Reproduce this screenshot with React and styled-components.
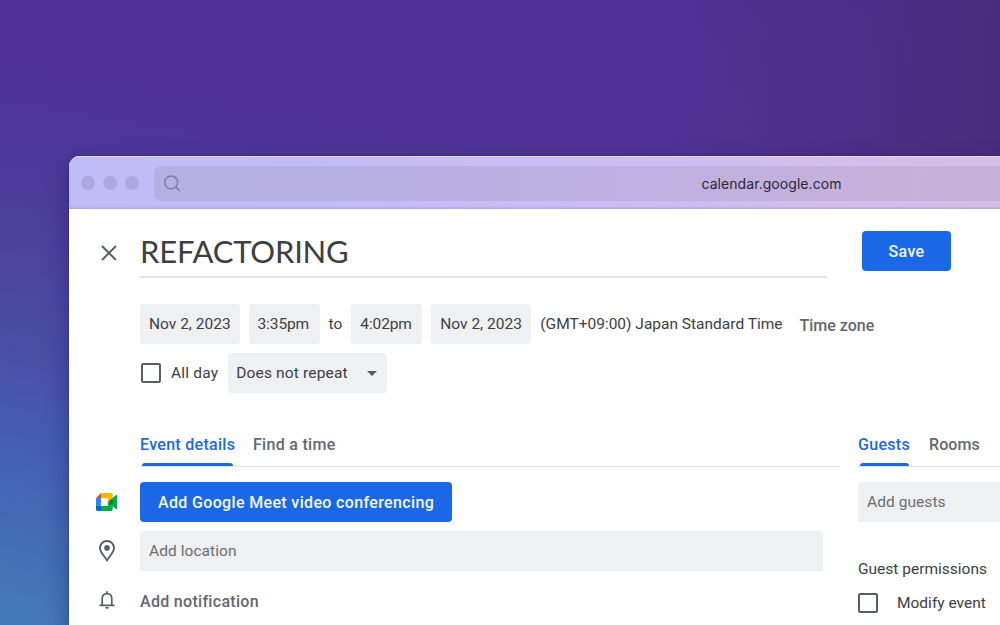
import React from "react";
import styled, { createGlobalStyle } from "styled-components";

const GlobalStyle = createGlobalStyle`
  *, *::before, *::after { box-sizing: border-box; }
  html, body { margin: 0; height: 100%; overflow: hidden; }
  body { font-family: Roboto, "Liberation Sans", sans-serif; color: #3c4043; }
`;

const Desktop = styled.div`
  width: 1000px;
  height: 625px;
  padding: 156px 0 0 69px;
  overflow: hidden;
  background:
    linear-gradient(93deg, rgba(72, 44, 120, 0) 65%, rgba(72, 44, 120, 0.4) 82%, rgba(72, 44, 120, 0.95) 100%),
    linear-gradient(190deg, #4e3096 0%, #4f3295 24%, #4e3496 34%, #4c3a9a 42%, #4d409c 50%, #4950a6 66%, #4560b1 78%, #4370b8 91%, #447abd 100%);
`;

const Window = styled.div`
  width: 1100px;
  height: 600px;
  border-radius: 11px 0 0 0;
  background: #fff;
  box-shadow: 0 0 2px rgba(20, 10, 60, 0.45), 0 10px 26px rgba(20, 12, 70, 0.36);
`;

const TitleBar = styled.div`
  display: flex;
  align-items: center;
  height: 53px;
  padding: 1px 0 0 12px;
  border-radius: 11px 0 0 0;
  background: linear-gradient(100deg, #c0bbf9 0%, #c5bcf6 30%, #cdbdf3 55%, #d5bfec 72%, #d6bfe8 85%);
  box-shadow: inset 0 1px 0 rgba(236, 226, 255, 0.75), inset 0 -2px 3px -1px rgba(90, 70, 150, 0.25);
`;

const Lights = styled.div`
  display: flex;
  gap: 8px;
  margin-right: 15px;
`;

const Light = styled.span`
  width: 14px;
  height: 14px;
  border-radius: 50%;
  background: #afa7df;
`;

const AddressBar = styled.div`
  display: flex;
  align-items: center;
  width: 1000px;
  height: 35px;
  padding-left: 9px;
  border-radius: 7px;
  background: rgba(143, 130, 160, 0.22);
`;

const Address = styled.span`
  margin: 2px 0 0 520.5px;
  font: 400 14px/20px Inter, sans-serif;
  letter-spacing: 0.06px;
  color: #2b2636;
`;

const Page = styled.main`
  display: flex;
  flex-direction: column;
  padding-left: 27px;
`;

const Header = styled.header`
  display: flex;
  height: 69px;
  align-items: flex-start;
`;

const CloseButton = styled.button`
  display: flex;
  width: 44px;
  height: 88px;
  padding: 36px 0 0 5px;
  border: 0;
  background: none;
`;

const Title = styled.h1`
  width: 687px;
  height: 69px;
  margin: 0;
  padding-top: 22px;
  border-bottom: 2px solid #e4e4e6;
  font: 400 31px/40px Lato, sans-serif;
  letter-spacing: -0.2px;
  color: #3c4043;
`;

const PrimaryButton = styled.button`
  width: ${(p) => p.$width};
  height: 40px;
  margin: ${(p) => p.$margin || "0"};
  padding: 1px 0 0;
  border: 0;
  border-radius: 4px;
  background: #1a68e6;
  color: #f4f8ff;
  font: 500 16px/39px Roboto, sans-serif;
  letter-spacing: 0.35px;
  white-space: nowrap;
`;

const FieldRow = styled.div`
  display: flex;
  align-items: center;
  height: 40px;
  margin: ${(p) => p.$margin};
`;

const Chip = styled.div`
  display: flex;
  align-items: center;
  width: ${(p) => p.$width};
  height: 40px;
  margin-right: ${(p) => p.$gap || "0"};
  padding-left: ${(p) => p.$inset || "9px"};
  border-radius: 4px;
  background: #eff0f2;
  font-size: 15.5px;
  line-height: 22px;
  letter-spacing: ${(p) => p.$spacing || "0"};
  white-space: nowrap;
`;

const Label = styled.span`
  margin: ${(p) => p.$margin || "0"};
  font-size: ${(p) => (p.$weight ? "16px" : "15.5px")};
  font-weight: ${(p) => p.$weight || 400};
  line-height: 22px;
  letter-spacing: ${(p) => p.$spacing || "0"};
  color: ${(p) => p.$color || "#3c4043"};
  white-space: nowrap;
`;

const Checkbox = styled.span`
  flex: none;
  width: 20px;
  height: 20px;
  border: 2px solid #5a5e63;
  border-radius: 2px;
`;

const Caret = styled.span`
  margin-left: 19px;
  border: 5px solid transparent;
  border-top-color: #55595d;
  border-bottom-width: 0;
`;

const Columns = styled.div`
  display: flex;
  gap: 18px;
  margin-top: 31px;
`;

const Details = styled.section`
  width: 744px;
`;

const Side = styled.section`
  width: 300px;
`;

const Tabs = styled.nav`
  display: flex;
  gap: 18px;
  height: 43px;
  margin-left: ${(p) => p.$indent || "0"};
  border-bottom: 1px solid #dfe0e2;
`;

const Tab = styled.div`
  position: relative;
  width: ${(p) => p.$width};
  padding-top: 10px;
  font: 500 16px/22px Roboto, sans-serif;
  letter-spacing: ${(p) => p.$spacing || "0.3px"};
  color: ${(p) => (p.$active ? "#1a68e6" : "#63676c")};
  white-space: nowrap;
  &::after {
    content: "";
    display: ${(p) => (p.$active ? "block" : "none")};
    position: absolute;
    left: 2px;
    right: 2px;
    bottom: 0;
    height: 3px;
    border-radius: 4px 4px 0 0;
    background: #1a68e6;
  }
`;

const DetailRow = styled.div`
  display: flex;
  align-items: center;
  height: 40px;
  margin-top: ${(p) => p.$top};
`;

const IconSlot = styled.span`
  display: flex;
  flex: none;
  width: 44px;
  padding-left: ${(p) => p.$inset || "0"};
`;

const Input = styled.div`
  width: ${(p) => p.$width};
  height: 40px;
  margin-top: ${(p) => p.$top || "0"};
  padding-left: 9px;
  border-radius: 4px 4px 0 0;
  background: #eff0f2;
  font-size: 15.5px;
  letter-spacing: 0.06px;
  line-height: 41px;
  color: #696d72;
`;

const SearchIcon = () => (
  <svg width="18" height="18" viewBox="0 0 18 18" fill="none" stroke="#8379ae" strokeWidth="1.5" strokeLinecap="round">
    <circle cx="8.2" cy="8.4" r="6.4" />
    <path d="M12.9 13.1 16.2 16.4" />
  </svg>
);

const CloseIcon = () => (
  <svg width="16" height="16" viewBox="0 0 16 16" stroke="#5a5e63" strokeWidth="2">
    <path d="M1 1 15 15M15 1 1 15" />
  </svg>
);

const MeetIcon = () => (
  <svg width="21" height="18" viewBox="0 0 87.5 72" preserveAspectRatio="none">
    <path fill="#00832d" d="M49.5 36l8.53 9.75 11.47 7.33 2-17.02-2-16.64-11.69 6.44z" />
    <path fill="#0066da" d="M0 51.5V66c0 3.315 2.685 6 6 6h14.5l3-10.96-3-9.54-9.95-3z" />
    <path fill="#e94235" d="M20.5 0L0 20.5l10.55 3 9.95-3 2.95-9.41z" />
    <path fill="#2684fc" d="M20.5 20.5H0v31h20.5z" />
    <path fill="#00ac47" d="M82.6 8.68L69.5 19.42v33.66l13.16 10.79c1.97 1.54 4.85.135 4.85-2.37V11c0-2.535-2.945-3.925-4.91-2.32zM49.5 36v15.5h-29V72h43c3.315 0 6-2.685 6-6V53.08z" />
    <path fill="#ffba00" d="M63.5 0h-43v20.5h29V36l20-16.57V6c0-3.315-2.685-6-6-6z" />
  </svg>
);

const PinIcon = () => (
  <svg width="16" height="22" viewBox="0 0 16 22">
    <path d="M8 1C4.1 1 1 4 1 7.9 1 12.4 5.8 16.5 8 20.4c2.2-3.9 7-8 7-12.5C15 4 11.9 1 8 1z" fill="none" stroke="#5a5e63" strokeWidth="1.9" />
    <circle cx="8" cy="7.9" r="2.8" fill="#5a5e63" />
  </svg>
);

const BellIcon = () => (
  <svg width="16" height="18" viewBox="0 0 16 18" fill="none" stroke="#5a5e63" strokeWidth="1.7">
    <path d="M3.2 14.3V7.4C3.2 4.6 5.2 2.6 8 2.6s4.8 2 4.8 4.8v6.9" />
    <path d="M.5 14.4h15M8 .2v2.4" />
    <path d="M6.2 16h3.6c0 1-.8 1.8-1.8 1.8S6.2 17 6.2 16z" fill="#5a5e63" stroke="none" />
  </svg>
);

export default function App() {
  return (
    <>
      <GlobalStyle />
      <Desktop>
        <Window>
          <TitleBar>
            <Lights>
              <Light />
              <Light />
              <Light />
            </Lights>
            <AddressBar>
              <SearchIcon />
              <Address>calendar.google.com</Address>
            </AddressBar>
          </TitleBar>
          <Page>
            <Header>
              <CloseButton aria-label="Close">
                <CloseIcon />
              </CloseButton>
              <Title>REFACTORING</Title>
              <PrimaryButton $width="89px" $margin="22px 0 0 35px">Save</PrimaryButton>
            </Header>
            <FieldRow $margin="26px 0 0 44px">
              <Chip $width="100px" $gap="8.5px">Nov 2, 2023</Chip>
              <Chip $width="71px" $spacing="-0.1px">3:35pm</Chip>
              <Label $margin="0 9px">to</Label>
              <Chip $width="71px" $gap="9px" $spacing="-0.1px">4:02pm</Chip>
              <Chip $width="100px">Nov 2, 2023</Chip>
              <Label $margin="0 17px 0 9px">(GMT+09:00) Japan Standard Time</Label>
              <Label $weight={500} $color="#63676c" $margin="3px 0 0">Time zone</Label>
            </FieldRow>
            <FieldRow $margin="9px 0 0 45px">
              <Checkbox />
              <Label $margin="0 10px" $spacing="0.2px">All day</Label>
              <Chip $width="159px" $inset="8px" $spacing="0.15px">
                Does not repeat
                <Caret />
              </Chip>
            </FieldRow>
            <Columns>
              <Details>
                <Tabs $indent="44px">
                  <Tab $active $width="95px">Event details</Tab>
                  <Tab>Find a time</Tab>
                </Tabs>
                <DetailRow $top="15px">
                  <IconSlot>
                    <MeetIcon />
                  </IconSlot>
                  <PrimaryButton $width="312px">Add Google Meet video conferencing</PrimaryButton>
                </DetailRow>
                <DetailRow $top="9px">
                  <IconSlot $inset="2.5px">
                    <PinIcon />
                  </IconSlot>
                  <Input $width="683px">Add location</Input>
                </DetailRow>
                <DetailRow $top="9px">
                  <IconSlot $inset="2.5px">
                    <BellIcon />
                  </IconSlot>
                  <Label $weight={500} $color="#63676c" $margin="4px 0 0" $spacing="0.3px">Add notification</Label>
                </DetailRow>
              </Details>
              <Side>
                <Tabs>
                  <Tab $active $width="53px">Guests</Tab>
                  <Tab $spacing="0.1px">Rooms</Tab>
                </Tabs>
                <Input $width="250px" $top="15px">Add guests</Input>
                <FieldRow $margin="27px 0 0">
                  <Label>Guest permissions</Label>
                </FieldRow>
                <FieldRow $margin="-6px 0 0">
                  <Checkbox />
                  <Label $margin="0 0 0 19px">Modify event</Label>
                </FieldRow>
              </Side>
            </Columns>
          </Page>
        </Window>
      </Desktop>
    </>
  );
}
